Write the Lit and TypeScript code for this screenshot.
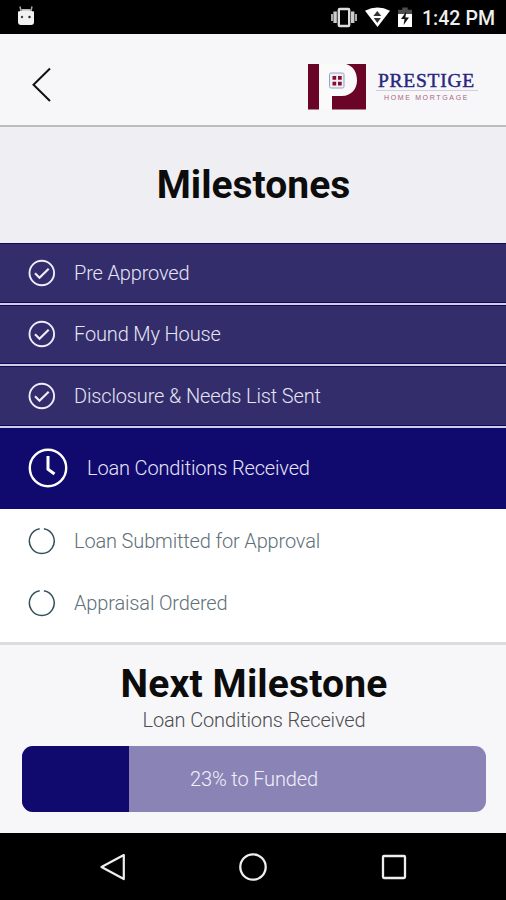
import { LitElement, html, css, svg } from "lit";
import { customElement, property } from "lit/decorators.js";

type Status = "done" | "current" | "pending";

interface Milestone {
  label: string;
  status: Status;
}

const MILESTONES: Milestone[] = [
  { label: "Pre Approved", status: "done" },
  { label: "Found My House", status: "done" },
  { label: "Disclosure & Needs List Sent", status: "done" },
  { label: "Loan Conditions Received", status: "current" },
  { label: "Loan Submitted for Approval", status: "pending" },
  { label: "Appraisal Ordered", status: "pending" },
];

@customElement("status-bar")
export class StatusBar extends LitElement {
  static styles = css`
    :host { display: flex; align-items: center; height: 34px; box-sizing: border-box; padding: 0 11px 0 17px; background: #000; color: #eee; flex: none; }
    svg { display: block; flex: none; }
    .spacer { flex: 1; }
    .wifi { margin-left: 7px; }
    .battery { margin-left: 8px; }
    .time { margin: 3px 0 0 10px; font: 500 19.5px/24px Roboto, sans-serif; white-space: nowrap; letter-spacing: 0.05px; }
  `;

  render() {
    return html`
      <svg width="18" height="34" viewBox="0 0 18 34">
        <path d="M4 11 L3 6.5 M14 11 L15 6.5" stroke="#aaa" stroke-width="1.5" />
        <path d="M4.5 9h9v3h-9z" fill="#bbb" />
        <path d="M1 11.5 Q9 9.5 17 11.5 V22 Q17 25 14 25 H4 Q1 25 1 22Z" fill="#f2f2f2" />
        <circle cx="5" cy="17" r="1.2" fill="#444" /><circle cx="12.5" cy="17" r="1.2" fill="#222" />
      </svg>
      <div class="spacer"></div>
      <svg width="28" height="34" viewBox="0 0 28 34">
        <path d="M1 14h2v7H1zM25 14h2v7h-2z" fill="#aaa" />
        <path d="M3.4 11.5h3.400V23h-3.400zM21 11.500h3.400V23h-3.400z" fill="#ccc" />
        <rect x="8.800" y="9" width="10.400" height="17" rx="1" fill="#000" stroke="#ddd" stroke-width="2.400" />
      </svg>
      <svg class="wifi" width="25" height="34" viewBox="0 0 25 34">
        <path d="M0 10.700 Q12.500 4.500 25 10.700 L12.500 27Z" fill="#fff" />
        <path d="M12.300 11 L16.300 16H8.300Z M8.800 18H15.800L12.300 23Z" fill="#333" />
      </svg>
      <svg class="battery" width="14" height="34" viewBox="0 0 14 34">
        <path d="M4.300 7.500h5.400v2.200H14V16H0V9.700H4.300Z" fill="#4d4d4d" />
        <path d="M0 14h14v13H0z" fill="#fff" />
        <path d="M8.300 11.500 L3 19H6.500L5.600 25L11 17.500H7.400Z" fill="#111" />
      </svg>
      <span class="time">1:42 PM</span>
    `;
  }
}

@customElement("brand-logo")
export class BrandLogo extends LitElement {
  static styles = css`
    :host { display: flex; gap: 9px; }
    svg { display: block; flex: none; }
    .words { display: flex; flex-direction: column; width: 103px; align-items: center; }
    .name { font: 400 19.5px/22px "Liberation Serif", serif; color: #29277f; white-space: nowrap; margin-top: 6px; height: 20px; -webkit-text-stroke: 0.45px #29277f; letter-spacing: 0.75px; }
    .rule { width: 102px; height: 1px; background: #cfcede; }
    .sub { font: 400 7px/9px "Liberation Sans", sans-serif; color: #a9647e; letter-spacing: 1.65px; white-space: nowrap; margin-top: 2px; }
  `;

  render() {
    return html`
      <svg width="58" height="46" viewBox="0 0 58 46">
        <rect x="0" y="0" width="58" height="45.500" fill="#fafafb" />
        <path d="M0 0H11V45.500H0ZM38 0H58V45.500H24V32H34C43 32 49 25 49 16.500C49 8 45 2 38 0Z" fill="#6b0527" />
        <rect x="21.500" y="9" width="14.500" height="15" rx="1.500" fill="#eef0f7" stroke="#9ca0c0" />
        <path d="M24.500 12h3.700v3.700h-3.700zM30 12h3.700v3.700H30zM24.500 17.700h3.700v3.700h-3.700zM30 17.700h3.700v3.700H30z" fill="#85102e" />
      </svg>
      <div class="words">
        <span class="name">PRESTIGE</span>
        <div class="rule"></div>
        <span class="sub">HOME MORTGAGE</span>
      </div>
    `;
  }
}

@customElement("milestone-row")
export class MilestoneRow extends LitElement {
  @property() label = "";
  @property({ reflect: true }) status: Status = "pending";

  static styles = css`
    :host { display: flex; align-items: center; box-sizing: border-box; height: 61.500px; padding-left: 28px; gap: 18px; font: 300 20px/24px Roboto, sans-serif; letter-spacing: -0.15px; }
    :host([status="done"]) { background: #332d6b; color: #e6e4f5; border-bottom: 2px solid #d0cee6; box-shadow: inset 0 1px #110a57, inset 0 -1px #110a57; }
    :host([status="current"]) { height: 81px; background: #110a6e; color: #e6e4f5; gap: 19px; }
    :host([status="pending"]) { background: #fff; color: #607078; padding-top: 4px; }
    svg { display: block; flex: none; }
    .label { white-space: nowrap; }
  `;

  private icon() {
    if (this.status === "done") {
      return html`<svg width="28" height="28" viewBox="0 0 28 28" fill="none" stroke="#eeedfb" stroke-width="1.900">
        <circle cx="13.800" cy="14" r="12.300" />${svg`<path d="M7 14.300 L11.500 18.800 L20.700 9.700" stroke-width="2.200" />`}
      </svg>`;
    }
    if (this.status === "current") {
      return html`<svg width="40" height="40" viewBox="0 0 40 40" fill="none" stroke="#fff" stroke-width="2.400">
        <circle cx="20" cy="20" r="18.200" /><path d="M20 8V21.200L26.500 26" stroke-width="3" />
      </svg>`;
    }
    return html`<svg width="28" height="28" viewBox="0 0 28 28" fill="none" stroke="#35505a" stroke-width="1.500">
      <path d="M15.900 1.780A12.400 12.400 0 1 1 11.700 1.780" />
    </svg>`;
  }

  render() {
    return html`${this.icon()}<span class="label">${this.label}</span>`;
  }
}

@customElement("funding-progress")
export class FundingProgress extends LitElement {
  @property({ type: Number }) percent = 0;

  static styles = css`
    :host { display: grid; height: 66px; border-radius: 11px; overflow: hidden; background: #8a84b6; }
    .fill { grid-area: 1 / 1; background: #110a6e; }
    .text { grid-area: 1 / 1; place-self: center; color: #f1effb; font: 300 20px/24px Roboto, sans-serif; letter-spacing: -0.15px; }
  `;

  render() {
    return html`
      <div class="fill" style="width:${this.percent}%"></div>
      <span class="text">${this.percent}% to Funded</span>
    `;
  }
}

@customElement("app-root")
export class AppRoot extends LitElement {
  static styles = css`
    :host { display: flex; flex-direction: column; width: 506px; height: 900px; overflow: hidden; background: #fff; font-family: Roboto, sans-serif; }
    h1, h2, p { margin: 0; }
    .header { display: flex; justify-content: space-between; height: 93px; box-sizing: border-box; padding: 30px 28px 0 30px; background: #f7f7f9; border-bottom: 2px solid #bcbcbe; flex: none; }
    .back { display: block; margin-top: 2px; }
    .title { display: flex; align-items: center; justify-content: center; height: 116px; background: #efeef3; flex: none; }
    h1, h2 { font: 700 39px/46px Roboto, sans-serif; color: #0c0c0d; }
    h1 { padding-left: 1px; }
    h2 { letter-spacing: 0.15px; }
    .list { flex: 1; min-height: 0; }
    .next { display: flex; flex-direction: column; align-items: center; height: 191px; box-sizing: border-box; border-top: 3px solid #dcdcdc; background: #f7f7f9; padding: 16px 20px 0 22px; flex: none; }
    .subtitle { font: 300 20px/24px Roboto, sans-serif; color: #4c4c50; margin: 1px 0 13.500px; letter-spacing: -0.15px; }
    funding-progress { align-self: stretch; }
    .nav { display: flex; align-items: center; justify-content: space-between; height: 67px; box-sizing: border-box; padding: 0 99px 0 99px; background: #000; flex: none; }
  `;

  render() {
    return html`
      <status-bar></status-bar>
      <header class="header">
        <svg class="back" width="22" height="38" viewBox="0 0 22 38" fill="none" stroke="#111" stroke-width="2">
          <path d="M20 2.500L3.500 18.800L20 35" />
        </svg>
        <brand-logo></brand-logo>
      </header>
      <div class="title"><h1>Milestones</h1></div>
      <main class="list">
        ${MILESTONES.map((m) => html`<milestone-row .label=${m.label} .status=${m.status}></milestone-row>`)}
      </main>
      <section class="next">
        <h2>Next Milestone</h2>
        <p class="subtitle">Loan Conditions Received</p>
        <funding-progress .percent=${23}></funding-progress>
      </section>
      <nav class="nav">
        <svg width="28" height="30" viewBox="0 0 28 30" fill="none" stroke="#eee" stroke-width="2.200"><path d="M24.800 3L2.500 15L24.800 27Z" stroke-linejoin="round" /></svg>
        <svg width="30" height="30" viewBox="0 0 30 30" fill="none" stroke="#eee" stroke-width="2.300"><circle cx="15" cy="15" r="12.700" /></svg>
        <svg width="28" height="30" viewBox="0 0 28 30" fill="none" stroke="#eee" stroke-width="2.300"><rect x="4" y="4" width="22" height="22" rx="1" /></svg>
      </nav>
    `;
  }
}
